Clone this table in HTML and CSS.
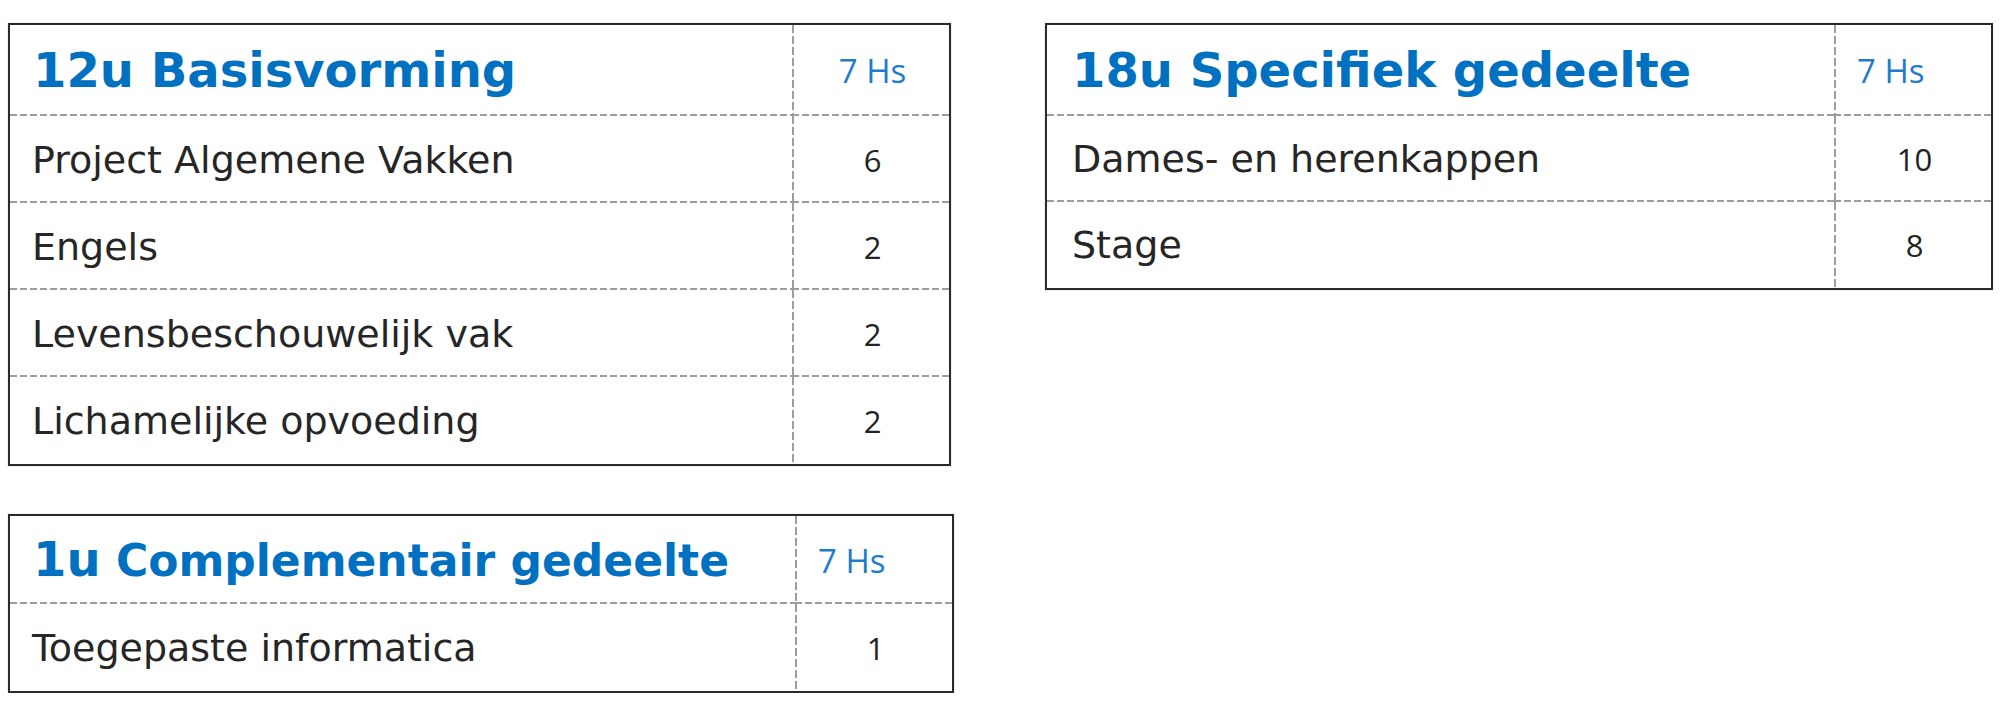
FILE: index.html
```html
<!DOCTYPE html>
<html lang="nl">
<head>
<meta charset="utf-8">
<title>Lessenrooster</title>
<link rel="stylesheet" href="styles.css">
</head>
<body>
<div class="page">
  <div class="col-left">
    <div class="tbl tbl-basis">
      <div class="row head">
        <div class="name"><span>12u Basisvorming</span></div>
        <div class="hs">7 Hs</div>
      </div>
      <div class="row">
        <div class="name"><span>Project Algemene Vakken</span></div>
        <div class="num">6</div>
      </div>
      <div class="row">
        <div class="name"><span>Engels</span></div>
        <div class="num">2</div>
      </div>
      <div class="row">
        <div class="name"><span>Levensbeschouwelijk vak</span></div>
        <div class="num">2</div>
      </div>
      <div class="row">
        <div class="name"><span>Lichamelijke opvoeding</span></div>
        <div class="num">2</div>
      </div>
    </div>

    <div class="tbl tbl-compl">
      <div class="row head">
        <div class="name"><span><span class="big">1u</span> Complementair gedeelte</span></div>
        <div class="hs">7 Hs</div>
      </div>
      <div class="row">
        <div class="name"><span>Toegepaste informatica</span></div>
        <div class="num">1</div>
      </div>
    </div>
  </div>

  <div class="tbl tbl-spec">
    <div class="row head">
      <div class="name"><span>18u Specifiek gedeelte</span></div>
      <div class="hs">7 Hs</div>
    </div>
    <div class="row">
      <div class="name"><span>Dames- en herenkappen</span></div>
      <div class="num">10</div>
    </div>
    <div class="row">
      <div class="name"><span>Stage</span></div>
      <div class="num">8</div>
    </div>
  </div>
</div>
</body>
</html>
```

FILE: styles.css
```css
html, body {
  margin: 0;
  background: #ffffff;
}

.page {
  display: flex;
  align-items: flex-start;
  gap: 91px;
  padding: 23px 0 0 8px;
}

.col-left {
  display: flex;
  flex-direction: column;
  gap: 48px;
}

.tbl {
  border: 2px solid #2a2a2a;
  box-shadow: 0 0 1px rgba(0, 0, 0, 0.35);
  background: #ffffff;
}

.tbl-basis { width: 939px; }
.tbl-compl { width: 942px; }
.tbl-spec  { width: 944px; }

.row {
  display: grid;
  grid-template-columns: 1fr 157px;
  height: 87px;
}

.row.head { height: 91px; }
.tbl-compl .row.head { height: 88px; }
.tbl-spec .row { height: 86px; }
.tbl-spec .row.head { height: 91px; }

.row > div {
  display: flex;
  align-items: center;
  background-image: repeating-linear-gradient(90deg, #9d9d9d 0 7px, transparent 7px 10px);
  background-position: left bottom;
  background-size: 100% 2px;
  background-repeat: no-repeat;
}

.row:last-child > div {
  background-image: none;
}

.row > .num,
.row > .hs {
  background-image:
    repeating-linear-gradient(180deg, #9d9d9d 0 8px, transparent 8px 11px),
    repeating-linear-gradient(90deg, #9d9d9d 0 7px, transparent 7px 10px);
  background-position: left top, left bottom;
  background-size: 2px 100%, 100% 2px;
  background-repeat: no-repeat, no-repeat;
}

.row:last-child > .num {
  background-image: repeating-linear-gradient(180deg, #9d9d9d 0 8px, transparent 8px 11px);
  background-position: left top;
  background-size: 2px 100%;
}

.name {
  padding-left: 22px;
  font-family: "DejaVu Sans", Verdana, sans-serif;
  font-size: 38px;
  color: #262626;
  white-space: nowrap;
}

.head .name {
  font-weight: bold;
  font-size: 48px;
  color: #0070c0;
  padding-left: 23px;
  padding-bottom: 2px;
}

.tbl-spec .name {
  padding-left: 25px;
}

.tbl-compl .head .name {
  font-size: 44px;
}

.tbl-compl .head .name .big {
  font-size: 48px;
}

.hs {
  padding-left: 23px;
  font-family: "Open Sans", "Noto Sans", sans-serif;
  font-size: 33px;
  color: #1f7bcc;
  white-space: nowrap;
}

.tbl-basis .hs {
  justify-content: center;
  padding-left: 4px;
}

.num {
  justify-content: center;
  padding-left: 4px;
  font-family: "Open Sans", "Noto Sans", sans-serif;
  font-size: 31px;
  color: #232323;
}
```
